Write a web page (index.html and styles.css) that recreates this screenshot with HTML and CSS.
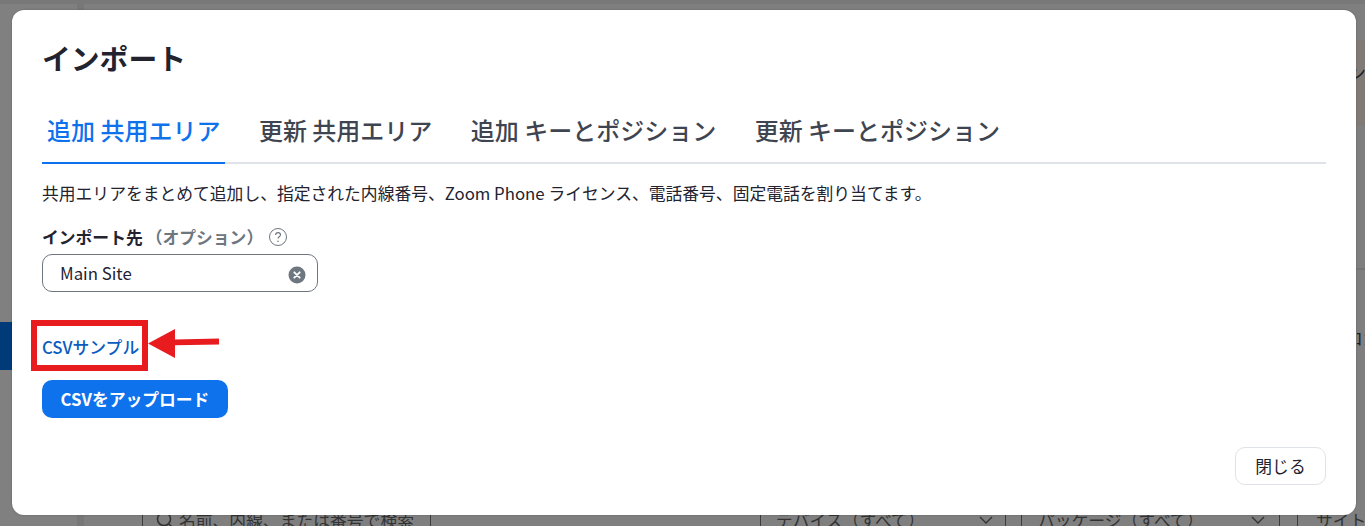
FILE: index.html
```html
<!DOCTYPE html>
<html lang="ja">
<head>
<meta charset="utf-8">
<title>インポート</title>
<link rel="stylesheet" href="styles.css">
</head>
<body>
<div class="page">
  <div class="top-line"></div>
  <div class="page-body">
    <div class="side-rail"><div class="side-active"></div></div>
    <div class="page-main">
      <div class="right-tag"><span class="right-tag-text">ン</span></div>
      <div class="right-rule"></div>
      <div class="right-cell"><span class="right-cell-text">ロカ</span></div>
      <div class="filters">
        <div class="search">
          <svg class="search-icon" viewBox="0 0 20 20" width="20" height="20" aria-hidden="true"><circle cx="9" cy="9" r="6.5" fill="none" stroke="#333" stroke-width="1.6"/><path d="M14 14l4.500 4.500" stroke="#333" stroke-width="1.600"/></svg>
          <span>名前、内線、または番号で検索</span>
        </div>
        <div class="select select-device"><span>デバイス（すべて）</span>
          <svg class="chev" viewBox="0 0 14 8" width="14" height="8" aria-hidden="true"><path d="M1 1l6 6 6-6" fill="none" stroke="#333" stroke-width="1.300"/></svg></div>
        <div class="select select-package"><span>パッケージ（すべて）</span>
          <svg class="chev" viewBox="0 0 14 8" width="14" height="8" aria-hidden="true"><path d="M1 1l6 6 6-6" fill="none" stroke="#333" stroke-width="1.300"/></svg></div>
        <div class="select select-site"><span>サイト</span></div>
      </div>
    </div>
  </div>
</div>

<div class="modal" role="dialog">
  <h1 class="modal-title">インポート</h1>
  <div class="tabs">
    <div class="tab tab-active">追加 共用エリア</div>
    <div class="tab">更新 共用エリア</div>
    <div class="tab">追加 キーとポジション</div>
    <div class="tab">更新 キーとポジション</div>
  </div>
  <p class="desc">共用エリアをまとめて追加し、指定された内線番号、Zoom Phone ライセンス、電話番号、固定電話を割り当てます。</p>
  <div class="label-row">
    <span class="label">インポート先</span><span class="label-opt">（オプション）</span>
    <svg class="help" viewBox="0 0 20 20" width="20" height="20" aria-hidden="true"><circle cx="10" cy="10" r="8.500" fill="none" stroke="#6e7680" stroke-width="1"/><path d="M7.600 8c0-1.500 1.100-2.400 2.500-2.400s2.400.9 2.400 2.200c0 1.900-2.500 1.900-2.500 3.700" fill="none" stroke="#6e7680" stroke-width="1.100"/><circle cx="10" cy="14.200" r=".8" fill="#6e7680"/></svg>
  </div>
  <div class="input">
    <span>Main Site</span>
    <svg class="clear" viewBox="0 0 18 18" width="18" height="18" aria-hidden="true"><circle cx="9" cy="9" r="8.500" fill="#6e7680"/><path d="M6.300 6.300l5.400 5.400M11.700 6.300l-5.400 5.400" stroke="#fff" stroke-width="1.800" stroke-linecap="round"/></svg>
  </div>
  <div class="sample">
    <a class="sample-link" href="#">CSVサンプル</a>
    <span class="callout-box"></span>
    <svg class="callout-arrow" viewBox="0 0 72 30" width="72" height="30" aria-hidden="true"><path d="M0 15.500L27 1v10.500l44-1v6l-44 .8V30z" fill="#e81c1f"/></svg>
  </div>
  <button class="upload" type="button">CSVをアップロード</button>
  <div class="footer"><button class="close" type="button">閉じる</button></div>
</div>
</body>
</html>
```
FILE: styles.css
```css
* { box-sizing: border-box; }
html, body { margin: 0; height: 526px; overflow: hidden; }
body {
  background: #7f7f7f;
  font-family: "Noto Sans CJK JP", "Noto Sans", sans-serif;
  color: #23232f;
  position: relative;
}
.page { height: 526px; display: flex; flex-direction: column; }
.top-line { height: 4px; background: #787878; }
.page-body { flex: 1; display: flex; min-height: 0; }
.side-rail { width: 84px; padding-top: 318px; background: #808080; border-right: 7px solid #777; }
.side-active { width: 14px; height: 48px; background: #003a78; }
.page-main { flex: 1; position: relative; }
.right-tag {
  position: absolute; right: 0; top: 36px; width: 12px; height: 86px;
  background: #807b77; overflow: hidden; font-size: 18px; line-height: 64px; color: #1d1d22;
}
.right-tag-text { display: block; margin-left: -5px; }
.right-rule { position: absolute; right: 0; top: 264px; width: 12px; height: 2px; background: #747474; }
.right-cell { position: absolute; right: 0; top: 322px; width: 8px; height: 24px; overflow: hidden; font-size: 16.8px; line-height: 24px; color: #1d1d22; }
.right-cell-text { display: block; width: 40px; margin-left: -11px; }
.filters {
  position: absolute; left: 58px; top: 496px; right: 0;
  display: flex; height: 40px; font-size: 16.8px; color: #333;
}
.search {
  width: 289px; margin-right: 329px; padding-left: 12px;
  display: flex; align-items: center; gap: 4px; border: 1px solid #3c3c3c; border-top: 0;
  white-space: nowrap;
}
.select {
  display: flex; align-items: center; justify-content: space-between;
  border-left: 1px solid #3c3c3c; padding: 0 12px 0 15px; white-space: nowrap;
}
.select-device { width: 246px; margin-right: 15px; border-right: 1px solid #3c3c3c; }
.select-package { width: 259px; margin-right: 17px; border-right: 1px solid #3c3c3c; padding-left: 16px; padding-right: 14px; }
.select-site { flex: 1; overflow: hidden; padding-left: 18px; justify-content: flex-start; }
.chev { flex: none; }

.modal {
  position: absolute; left: 12px; top: 10px; width: 1344px; height: 505px;
  background: #fff; border-radius: 12px; padding: 26px 30px 30px;
  display: flex; flex-direction: column;
  box-shadow: 0 0 2px rgba(0, 0, 0, .25);
}
.modal-title { margin: 0; font-size: 28.8px; line-height: 44px; font-weight: 700; color: #23232f; }
.tabs { margin-top: 32px; display: flex; gap: 28.500px; border-bottom: 2px solid #dfe3e8; height: 52px; }
.tab { padding: 0 5px; font-size: 24px; font-weight: 500; line-height: 36px; color: #3f4550; white-space: nowrap; height: 52px; }
.tab-active { color: #0e72ed; border-bottom: 2px solid #0e72ed; }
.desc { margin: 17px 0 0; font-size: 16.8px; line-height: 24px; color: #23232f; white-space: nowrap; }
.label-row { margin-top: 20px; height: 24px; display: flex; align-items: center; font-size: 16.8px; font-weight: 700; line-height: 24px; }
.label-opt { color: #6e7680; margin-left: 3px; }
.help { margin-left: 5px; }
.input {
  margin-top: 5px; width: 276px; height: 38px; border: 1px solid #6e7680; border-radius: 10px;
  padding: 0 11px 0 17px; display: flex; align-items: center; justify-content: space-between;
  font-size: 16.8px; color: #23232f;
}
.clear { margin-top: 4px; }
.sample { margin-top: 43px; position: relative; align-self: flex-start; height: 24px; }
.sample-link { font-size: 16.8px; font-weight: 500; line-height: 24px; color: #0b5cbe; text-decoration: none; display: block; }
.callout-box { position: absolute; left: -11px; top: -15px; width: 117px; height: 51px; border: 6px solid #e81c1f; }
.callout-arrow { position: absolute; left: 106px; top: -7px; }
.upload {
  margin-top: 21px; width: 186px; height: 38px; border: 0; border-radius: 10px;
  background: #0e72ed; color: #fff; font: 700 16.8px/24px "Noto Sans CJK JP", sans-serif; padding: 0;
}
.footer { margin-top: auto; display: flex; justify-content: flex-end; }
.close {
  width: 91px; height: 38px; border: 1px solid #dfe3e8; border-radius: 10px; background: #fff;
  color: #23232f; font: 400 16.8px/24px "Noto Sans CJK JP", sans-serif; padding: 0;
}
```
